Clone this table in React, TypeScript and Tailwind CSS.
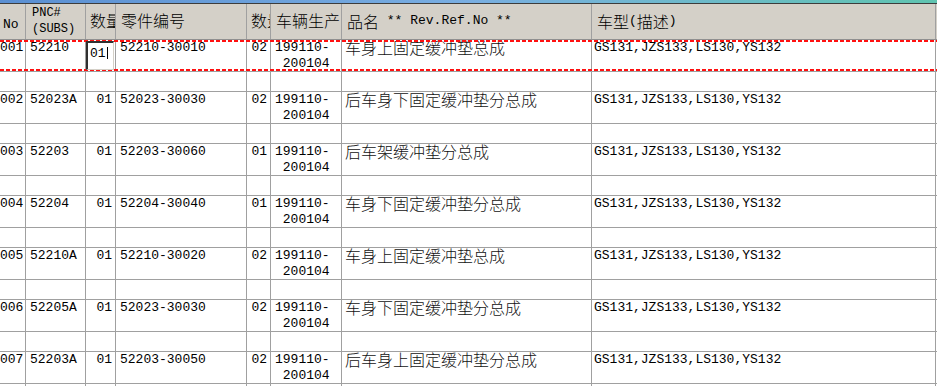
import React from 'react';

interface Linha {
    no: string;
    pnc: string;
    qtd: string;
    peca: string;
    qtd2: string;
    nome: string;
}

const linhas: Linha[] = [
    { no: '001', pnc: '52210', qtd: '01', peca: '52210-30010', qtd2: '02', nome: '车身上固定缓冲垫总成' },
    { no: '002', pnc: '52023A', qtd: '01', peca: '52023-30030', qtd2: '02', nome: '后车身下固定缓冲垫分总成' },
    { no: '003', pnc: '52203', qtd: '01', peca: '52203-30060', qtd2: '01', nome: '后车架缓冲垫分总成' },
    { no: '004', pnc: '52204', qtd: '01', peca: '52204-30040', qtd2: '01', nome: '车身下固定缓冲垫分总成' },
    { no: '005', pnc: '52210A', qtd: '01', peca: '52210-30020', qtd2: '02', nome: '车身上固定缓冲垫总成' },
    { no: '006', pnc: '52205A', qtd: '01', peca: '52023-30030', qtd2: '02', nome: '车身下固定缓冲垫分总成' },
    { no: '007', pnc: '52203A', qtd: '01', peca: '52203-30050', qtd2: '02', nome: '后车身上固定缓冲垫分总成' },
];

const grade = 'grid grid-cols-[26px_60px_30px_131px_24px_71px_250px_344px_1fr]';
const cel = 'border-r border-[#a0a0a0] overflow-hidden whitespace-nowrap';
const cjk = "font-['Noto_Sans_CJK_SC',sans-serif] text-[16px] font-light";

const LinhaDados: React.FC<{ linha: Linha; ativa?: boolean }> = ({ linha, ativa }) => (
    <div className="relative">
        <div className={`${grade} h-[32px] border-b border-[#a0a0a0] leading-[16px]`}>
            <div className={`${cel} text-right pr-[2px]`}>{linha.no}</div>
            <div className={`${cel} pl-[4px]`}>{linha.pnc}</div>
            {ativa ? (
                <div className={`${cel} relative`}>
                    <div className="absolute left-0 top-[1px] w-[28px] h-[29px] bg-white border-l-2 border-t-2 border-[#303030] border-r border-b border-r-[#d4d0c8] border-b-[#d4d0c8] z-10 pl-[2px] pt-[3px] flex items-start">
                        <span>{linha.qtd}</span>
                        <span className="ml-[1px] mt-[1px] w-px h-[12px] bg-black" />
                    </div>
                </div>
            ) : (
                <div className={`${cel} text-right pr-[3px]`}>{linha.qtd}</div>
            )}
            <div className={`${cel} pl-[4px]`}>{linha.peca}</div>
            <div className={`${cel} text-right pr-[3px]`}>{linha.qtd2}</div>
            <div className={`${cel} pl-[4px] whitespace-pre`}>
                <div>199110-</div>
                <div> 200104</div>
            </div>
            <div className={`${cel} pl-[3px] ${cjk} leading-[14px] text-[#111]`}>{linha.nome}</div>
            <div className={`${cel} pl-[2px]`}>GS131,JZS133,LS130,YS132</div>
            <div />
        </div>
        {ativa && (
            <>
                <div className="absolute left-0 right-0 top-0 h-[2px] bg-[repeating-linear-gradient(90deg,#ff1010_0_4px,transparent_4px_6px)]" />
                <div className="absolute left-0 right-0 bottom-[1px] h-[2px] bg-[repeating-linear-gradient(90deg,#ff1010_0_4px,transparent_4px_6px)]" />
            </>
        )}
    </div>
);

const LinhaVazia: React.FC = () => (
    <div className={`${grade} h-[20px] border-b border-[#a0a0a0]`}>
        {Array.from({ length: 8 }).map((_, i) => (
            <div key={i} className={cel} />
        ))}
        <div />
    </div>
);

export default function App() {
    return (
        <div className="w-[937px] h-[386px] overflow-hidden bg-white text-black text-[13px] font-['Liberation_Mono','Noto_Sans_CJK_SC',monospace]">
            {/* barra da janela */}
            <div className="h-[3px] bg-gradient-to-r from-[#5a8fd2] via-[#79aee2] to-[#5fc4b0]" />
            <div className="h-px bg-[#3c3c3c]" />

            {/* cabeçalho */}
            <div className={`${grade} h-[36px] bg-[#d4d0c8] border-b border-[#909090] items-stretch`}>
                <div className={`${cel} flex items-center pl-[3px] pt-[6px]`}>No</div>
                <div className={`${cel} flex flex-col justify-center pl-[6px] text-[12px] leading-[16px] pb-[1px]`}>
                    <span>PNC#</span>
                    <span>(SUBS)</span>
                </div>
                <div className={`${cel} flex items-center pl-[4px] pb-[3px] ${cjk}`}>数量</div>
                <div className={`${cel} flex items-center pl-[5px] pb-[3px] ${cjk}`}>零件编号</div>
                <div className={`${cel} flex items-center pl-[4px] pb-[3px] ${cjk}`}>数量</div>
                <div className={`${cel} flex items-center pl-[5px] pb-[3px] ${cjk}`}>车辆生产</div>
                <div className={`${cel} flex items-center pl-[5px] pb-[1px]`}>
                    <span className={cjk}>品名</span>
                    <span className="whitespace-pre"> ** Rev.Ref.No **</span>
                </div>
                <div className={`${cel} flex items-center pl-[5px] pb-[1px]`}>
                    <span className={cjk}>车型</span>
                    <span>(</span>
                    <span className={cjk}>描述</span>
                    <span>)</span>
                </div>
                <div className="bg-[#d4d0c8]" />
            </div>

            {linhas.map((linha, i) => (
                <React.Fragment key={linha.no}>
                    <LinhaDados linha={linha} ativa={i === 0} />
                    <LinhaVazia />
                </React.Fragment>
            ))}
        </div>
    );
}
